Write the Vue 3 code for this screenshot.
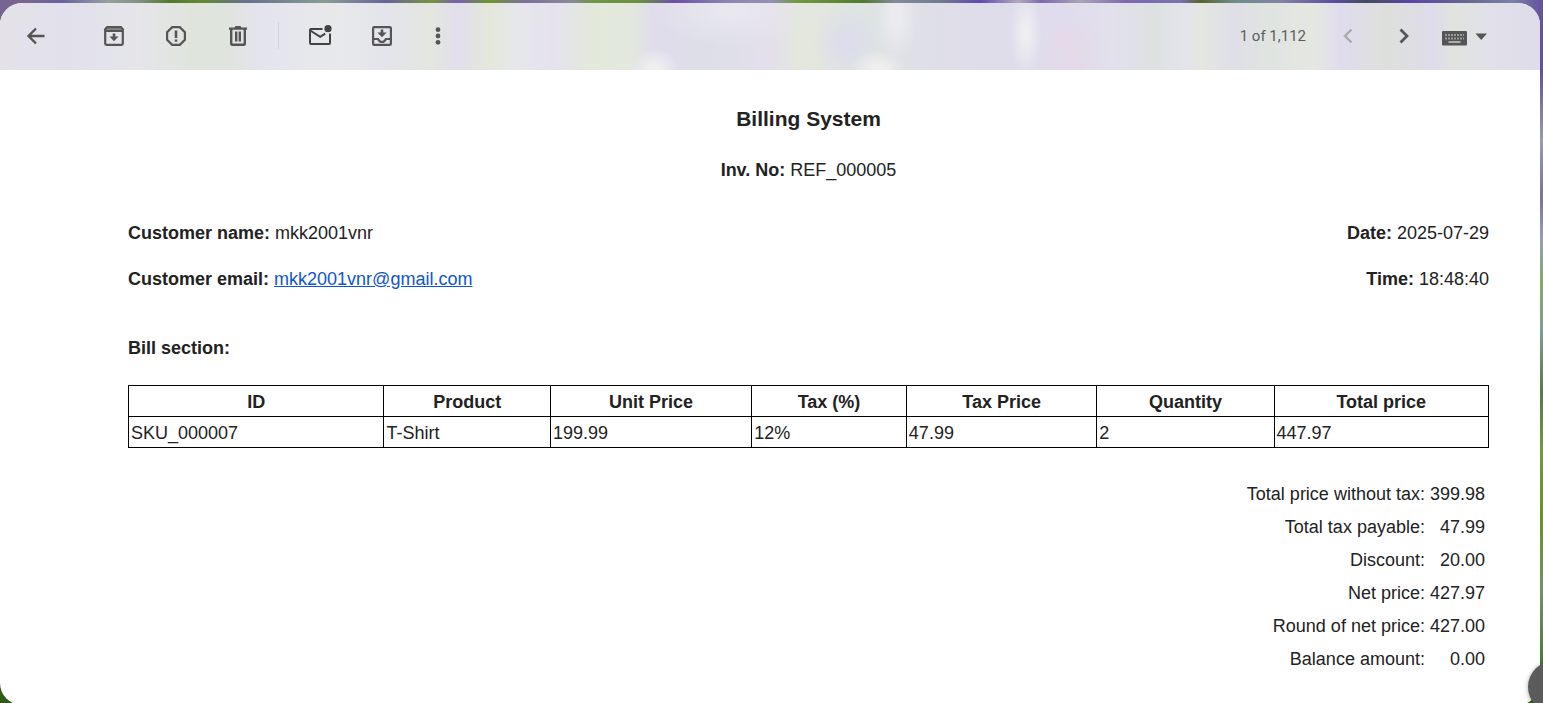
<script setup>
const columns = [
  { title: 'ID', width: 'w-id' },
  { title: 'Product', width: 'w-product' },
  { title: 'Unit Price', width: 'w-unit' },
  { title: 'Tax (%)', width: 'w-tax' },
  { title: 'Tax Price', width: 'w-taxprice' },
  { title: 'Quantity', width: 'w-quantity' },
  { title: 'Total price', width: 'w-total' },
]
const rows = [['SKU_000007', 'T-Shirt', '199.99', '12%', '47.99', '2', '447.97']]
const totals = [
  ['Total price without tax:', '399.98'],
  ['Total tax payable:', '47.99'],
  ['Discount:', '20.00'],
  ['Net price:', '427.97'],
  ['Round of net price:', '427.00'],
  ['Balance amount:', '0.00'],
]
</script>

<template>
  <div class="shell">
    <main class="panel">
      <header class="toolbar">
        <button class="tool back" aria-label="Back">
          <svg width="26" height="26" viewBox="0 0 26 26"><path d="M21.500 13H6M13 5.500 5.500 13l7.500 7.500" fill="none" stroke="currentColor" stroke-width="2.400" /></svg>
        </button>
        <div class="group">
          <button class="tool" aria-label="Archive">
            <svg width="26" height="26" viewBox="0 0 26 26">
              <path d="M5.500 3.200h15l2.400 3v1.600H3.100V6.200z" fill="currentColor" opacity=".65" />
              <path d="M4.200 8v12.500q0 1.300 1.300 1.300h15q1.300 0 1.300-1.300V6.400L19.800 4.100H6.200L4.200 6.400zM4.200 8h17.600" fill="none" stroke="currentColor" stroke-width="2.200" />
              <path d="M11.700 10.500h2.600V13.500h3.200L13 18.200l-4.500-4.700h3.200z" fill="currentColor" />
            </svg>
          </button>
          <button class="tool" aria-label="Report spam">
            <svg width="26" height="26" viewBox="0 0 26 26">
              <path d="M9.200 4.100h7.600l5.100 5.100v7.600l-5.100 5.100H9.200l-5.100-5.100V9.200z" fill="none" stroke="currentColor" stroke-width="2.200" />
              <path d="M11.700 7.500h2.600V15h-2.600zM11.700 16.500h2.600v2.200h-2.600z" fill="currentColor" />
            </svg>
          </button>
          <button class="tool" aria-label="Delete">
            <svg width="26" height="26" viewBox="0 0 26 26">
              <path d="M4 4.400h5.500L10.500 3h5l1 1.400H22v2.400H4z" fill="currentColor" />
              <path d="M6.200 6v14.500q0 1.300 1.300 1.300h11q1.300 0 1.300-1.300V6" fill="none" stroke="currentColor" stroke-width="2.400" />
              <path d="M11.200 8.500v10M14.800 8.500v10" fill="none" stroke="currentColor" stroke-width="2.400" />
            </svg>
          </button>
        </div>
        <span class="divider"></span>
        <div class="group">
          <button class="tool dark" aria-label="Mark as unread">
            <svg width="26" height="26" viewBox="0 0 26 26">
              <path d="M15.500 6H4q-1 0-1 1v13q0 1 1 1h18q1 0 1-1v-9.500M3.200 7.500l10 6.300 5-3.200" fill="none" stroke="currentColor" stroke-width="2" />
              <circle cx="21" cy="5.700" r="3.600" fill="currentColor" />
            </svg>
          </button>
          <button class="tool" aria-label="Move to inbox">
            <svg width="26" height="26" viewBox="0 0 26 26">
              <rect x="4.100" y="4.100" width="17.800" height="17.800" rx="1.200" fill="none" stroke="currentColor" stroke-width="2.200" />
              <path d="M4 16h5q1.500 3 4 3t4-3h5" fill="none" stroke="currentColor" stroke-width="2.200" />
              <path d="M11.700 6.500h2.600V9.500h3.400L13 14.200 8.300 9.500h3.400z" fill="currentColor" />
            </svg>
          </button>
        </div>
        <button class="tool more" aria-label="More">
          <svg width="26" height="26" viewBox="0 0 26 26" fill="currentColor"><circle cx="13" cy="6.700" r="2.400" /><circle cx="13" cy="13" r="2.400" /><circle cx="13" cy="19.300" r="2.400" /></svg>
        </button>
        <span class="count">1 of 1,112</span>
        <button class="tool newer" aria-label="Newer" disabled>
          <svg width="26" height="26" viewBox="0 0 26 26"><path d="m16.500 6.500-6.500 6.500 6.500 6.500" fill="none" stroke="currentColor" stroke-width="2.400" /></svg>
        </button>
        <button class="tool older" aria-label="Older">
          <svg width="26" height="26" viewBox="0 0 26 26"><path d="m9.500 6.500 6.500 6.500-6.500 6.500" fill="none" stroke="currentColor" stroke-width="2.700" /></svg>
        </button>
        <button class="tool keyboard" aria-label="Select input tool">
          <svg width="46" height="26" viewBox="0 0 46 26">
            <rect x="0" y="8" width="25" height="14.500" rx="1" fill="currentColor" />
            <path d="M3 12h19M3 15.500h19" stroke="#99999b" stroke-width="2" stroke-dasharray="2 1" />
            <path d="M6.500 19h12" stroke="#c9c9cb" stroke-width="1.500" />
            <path d="M33.500 10.500h11.500L39.200 17z" fill="currentColor" />
          </svg>
        </button>
      </header>

      <article class="invoice">
        <h1>Billing System</h1>
        <p class="number"><b>Inv. No:</b> REF_000005</p>
        <section class="details">
          <div>
            <p><b>Customer name:</b> mkk2001vnr</p>
            <p><b>Customer email:</b> <a href="mailto:mkk2001vnr@gmail.com">mkk2001vnr@gmail.com</a></p>
          </div>
          <div class="when">
            <p><b>Date:</b> 2025-07-29</p>
            <p><b>Time:</b> 18:48:40</p>
          </div>
        </section>
        <h2>Bill section:</h2>
        <table class="items">
          <thead>
            <tr><th v-for="c in columns" :key="c.title" :class="c.width">{{ c.title }}</th></tr>
          </thead>
          <tbody>
            <tr v-for="row in rows" :key="row[0]"><td v-for="(cell, i) in row" :key="i">{{ cell }}</td></tr>
          </tbody>
        </table>
        <table class="totals">
          <tbody>
            <tr v-for="t in totals" :key="t[0]"><th scope="row">{{ t[0] }}</th><td>{{ t[1] }}</td></tr>
          </tbody>
        </table>
      </article>
    </main>
    <button class="bubble" aria-label="Open side panel"></button>
  </div>
</template>

<style>
html,
body {
  margin: 0;
  overflow: hidden;
}
</style>

<style scoped>
.shell {
  position: relative;
  box-sizing: border-box;
  height: 100vh;
  padding: 3px 3px 0 0;
  overflow: hidden;
  background:
    linear-gradient(90deg, #756591 0%, #7d658d 2%, #6662a0 4%, #97a0a0 7%, #7f9282 9%, #55782e 11%, #658934 13%, #65728e 16%, #879d93 21%, #67649a 25%, #76943b 28%, #7960b1 29.6%, #6d9530 31.7%, #7d719b 34%, #8a8799 37%, #709548 38.6%, #69903f 41.5%, #6c4fa6 43.7%, #8a86b0 47%, #9490b6 50%, #729944 51.5%, #517a2d 56%, #838b9a 58%, #6e7c90 61%, #6448b0 63.5%, #b2a9bf 66%, #7f69ad 67.5%, #aaa4b7 70%, #7f69ad 73%, #7873ae 76.5%, #59642c 77.8%, #6f8d8a 80%, #8184a4 83%, #5c4c9f 86.5%, #414d5e 88.5%, #5c45a6 91.5%, #66668f 95%, #7a82a5 98%, #63519c 100%) top / 100% 24px no-repeat,
    linear-gradient(#685298 0%, #63519c 10%, #929fab 20%, #7c70a2 28%, #91a1b5 34%, #83ab60 40%, #7ba18d 47%, #557c43 56%, #719c37 64%, #69921d 74%, #729263 84%, #4b7c36 94%, #315b14 100%) right / 3px 100% no-repeat,
    #315b14;
}
.panel {
  box-sizing: border-box;
  min-height: calc(100vh - 1px);
  overflow: hidden;
  border-radius: 22px;
  background: #fff;
  color: #222;
  font: 18px/27px "Liberation Sans", Arial, sans-serif;
}
.toolbar {
  display: flex;
  align-items: center;
  box-sizing: border-box;
  height: 67px;
  padding: 0 52px 2px 14px;
  color: #555;
  background:
    radial-gradient(ellipse 24px 22px at 42.5% 100%, #efeff0 20%, transparent 100%),
    radial-gradient(ellipse 28px 20px at 57% 100%, #efefef 20%, transparent 100%),
    radial-gradient(ellipse 22px 44px at 58.2% 20%, #ebebf0 20%, transparent 100%),
    radial-gradient(ellipse 16px 44px at 66.6% 45%, #efeff0 10%, transparent 100%),
    radial-gradient(ellipse 34px 38px at 55% 60%, #dcdcec 10%, transparent 100%),
    radial-gradient(ellipse 36px 44px at 69.6% 75%, #e5d9e7 10%, transparent 100%),
    radial-gradient(ellipse 80px 36px at 47.5% 10%, #e9e7ef 10%, transparent 100%),
    linear-gradient(90deg, #e4e1e8 0%, #e2e1ec 5%, #e5e5ea 9%, #dfe5dc 12.5%, #e0e4df 15%, #e4e4ee 17%, #e8e9ea 22%, #e4e4ec 25%, #e3e6df 28%, #e2deec 29.8%, #e4e8da 31.8%, #e6e7ea 33.5%, #e5e2ee 36%, #e3e9da 38.6%, #e2e8dd 41%, #e0dcec 42.5%, #dddfe7 46%, #e4dfec 50%, #e3e7dc 51.8%, #e2e6df 53.5%, #dde4e2 56%, #dfdfe8 60%, #dfdcea 65%, #e0dcee 69%, #e2e0ec 72%, #dce1e2 75%, #e4e4ec 77%, #e4e6e0 78%, #dfdfe8 80%, #dfe3e1 82%, #e5e8e1 85.3%, #e0dcee 87%, #dddfdb 90%, #dedcea 93%, #e0e3e0 94.5%, #e1e0ea 97%, #dfdce9 100%);
}
.tool {
  display: flex;
  flex: none;
  align-items: center;
  justify-content: center;
  width: 44px;
  height: 44px;
  padding: 0;
  border: 0;
  background: none;
  color: inherit;
}
.tool.dark {
  color: #424242;
}
.group {
  display: flex;
  gap: 18px;
}
.back {
  margin-right: 34px;
}
.divider {
  width: 1px;
  height: 27px;
  margin: 0 19px 0 18px;
  background: #d2d2d8;
}
.more {
  margin-left: 12px;
}
.count {
  margin: 0 20px 0 auto;
  color: #5d5d61;
  font: 15px/24px Roboto, sans-serif;
}
.tool.newer {
  color: #aaa;
}
.older {
  margin: 0 16px 0 12px;
}
.tool.keyboard {
  width: 46px;
}
.invoice {
  padding: 34px 51px 28px 128px;
}
.invoice p,
.invoice h1,
.invoice h2 {
  margin: 0;
}
.invoice h1 {
  margin-bottom: 23px;
  font-size: 21px;
  line-height: 30px;
  text-align: center;
}
.number {
  text-align: center;
}
.details {
  display: flex;
  justify-content: space-between;
  margin: 36px 0 42px;
}
.details div {
  display: grid;
  gap: 19px;
}
.when {
  text-align: right;
}
.invoice h2 {
  margin-bottom: 23px;
  font-size: 18px;
}
a {
  color: #15c;
}
.items {
  width: 100%;
  table-layout: fixed;
  border-collapse: collapse;
}
.items th,
.items td {
  padding: 3px 2px 0;
  border: 1px solid #000;
}
.w-id {
  width: 18.9%;
}
.w-product {
  width: 12.2%;
}
.w-unit {
  width: 14.8%;
}
.w-tax {
  width: 11.3%;
}
.w-taxprice {
  width: 14%;
}
.w-quantity {
  width: 13%;
}
.w-total {
  width: 15.8%;
}
.totals {
  margin: 30px 2px 0 auto;
  border-spacing: 0;
  text-align: right;
}
.totals th,
.totals td {
  padding: 3px 2px;
  font-weight: 400;
}
.totals th {
  padding-right: 3px;
}
.bubble {
  position: absolute;
  right: -37px;
  bottom: -10px;
  width: 52px;
  height: 52px;
  border: 0;
  border-radius: 50%;
  background: #5b5b5b;
  box-shadow: 0 1px 5px rgb(0 0 0 / 35%);
}
</style>
